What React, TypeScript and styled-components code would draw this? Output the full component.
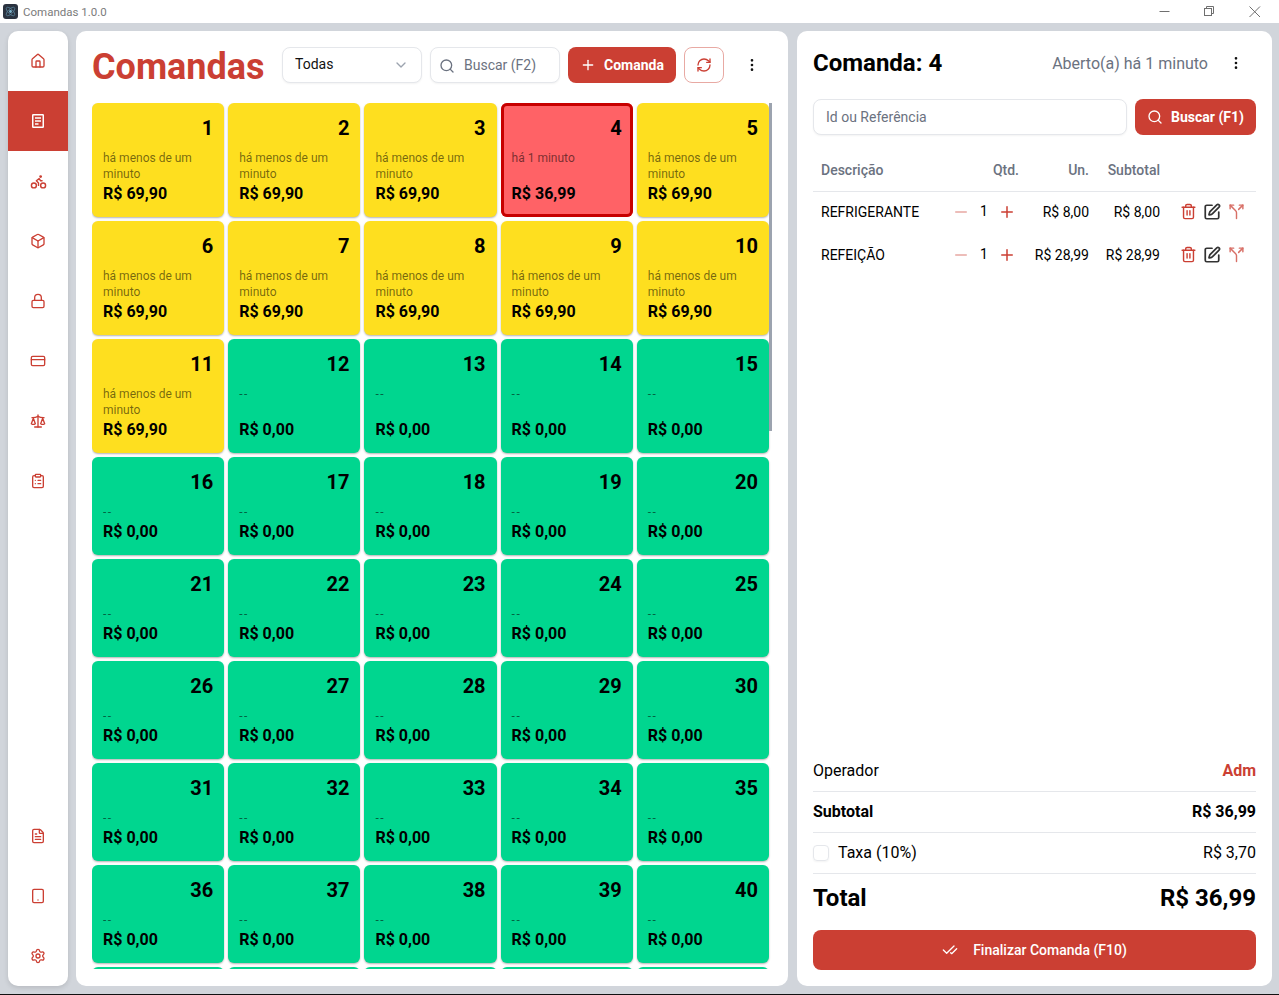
import React from "react";
import styled, { createGlobalStyle } from "styled-components";
import {
    Bike,
    Box,
    CheckCheck,
    ChevronDown,
    ClipboardList,
    CreditCard,
    EllipsisVertical,
    FileText,
    House,
    Lock,
    Minus,
    Plus,
    RefreshCw,
    Scale,
    Search,
    Settings,
    Split,
    SquarePen,
    Tablet,
    Trash2,
} from "lucide-react";

const RED = "#cb3f33";

const GlobalStyle = createGlobalStyle`
    * {
        box-sizing: border-box;
    }
    html, body {
        margin: 0;
        padding: 0;
        background: #d1d5db;
        font-family: Roboto, "Liberation Sans", sans-serif;
        color: #000;
    }
`;

const Page = styled.div`
    width: 1279px;
    height: 995px;
    display: flex;
    flex-direction: column;
    overflow: hidden;
    border-bottom: 1px solid #111;
`;

const TitleBar = styled.header`
    height: 23px;
    flex: none;
    background: #fff;
    display: flex;
    align-items: center;
    padding-left: 3px;
    font-family: Roboto, sans-serif;
    font-size: 11.5px;
    color: #7b7b7b;
`;

const AppIcon = styled.svg`
    width: 15px;
    height: 15px;
    margin-right: 5px;
`;

const WindowControls = styled.div`
    margin-left: auto;
    display: flex;
    align-items: center;
    margin-right: 2px;
`;

const WindowButton = styled.svg`
    width: 45px;
    height: 22px;
    stroke: #6f6f6f;
    fill: none;
    stroke-width: 1;
`;

const Body = styled.div`
    flex: 1;
    min-height: 0;
    display: grid;
    grid-template-columns: 60px 712px 476px;
    column-gap: 8px;
    padding: 8px 7px 8px 8px;
`;

const Sidebar = styled.nav`
    background: #fff;
    border-radius: 10px;
    box-shadow: 0 2px 5px rgba(0, 0, 0, 0.12);
    display: flex;
    flex-direction: column;
    overflow: hidden;
`;

const SideItem = styled.a<{ $active?: boolean }>`
    height: 60px;
    flex: none;
    display: flex;
    align-items: center;
    justify-content: center;
    color: ${(p) => (p.$active ? "#fff" : RED)};
    background: ${(p) => (p.$active ? RED : "transparent")};
`;

const SideSpacer = styled.div`
    flex: 1;
`;

const Main = styled.main`
    background: #fff;
    border-radius: 10px;
    padding: 16px 16px 17px;
    display: flex;
    flex-direction: column;
    gap: 20px;
    min-height: 0;
`;

const MainHeader = styled.div`
    display: flex;
    align-items: center;
    height: 36px;
    flex: none;
`;

const PageTitle = styled.h1`
    margin: 3px 18px 0 0;
    width: 172px;
    font-size: 36px;
    line-height: 40px;
    font-weight: 700;
    color: ${RED};
    white-space: nowrap;
`;

const Field = styled.div<{ $width: string }>`
    width: ${(p) => p.$width};
    height: 36px;
    border: 1px solid #e5e7eb;
    border-radius: 8px;
    box-shadow: 0 1px 2px rgba(0, 0, 0, 0.05);
    background: #fff;
    display: flex;
    align-items: center;
    padding: 0 12px;
    font-size: 14px;
    color: #6b7280;
    margin-right: 8px;
    flex: none;
`;

const SelectField = styled(Field)`
    color: #111;
    justify-content: space-between;
    padding-bottom: 2px;
    svg {
        color: #9ca3af;
        margin-top: 2px;
    }
`;

const SearchField = styled(Field)`
    padding-left: 8px;
`;

const FieldIcon = styled.span`
    display: flex;
    color: #6b7280;
    margin-right: 9px;
    margin-top: 2px;
`;

const Button = styled.button<{ $width: string }>`
    width: ${(p) => p.$width};
    height: 36px;
    flex: none;
    border: 0;
    border-radius: 8px;
    background: ${RED};
    color: #fff;
    font-family: inherit;
    font-size: 14px;
    font-weight: 700;
    display: flex;
    align-items: center;
    justify-content: center;
    gap: 8px;
    padding: 0;
`;

const WideButton = styled(Button)`
    height: 40px;
    font-weight: 500;
    gap: 15px;
    padding-bottom: 1px;
`;

const RefreshButton = styled.button`
    width: 40px;
    height: 36px;
    flex: none;
    margin: 0 10px 0 8px;
    border: 1px solid #e8a9a3;
    border-radius: 8px;
    background: #fff;
    color: ${RED};
    display: flex;
    align-items: center;
    justify-content: center;
    padding: 0;
`;

const IconOnly = styled.span`
    width: 36px;
    height: 36px;
    flex: none;
    display: flex;
    align-items: center;
    justify-content: center;
    color: #111;
`;

const DetailMenu = styled(IconOnly)`
    margin-right: 2px;
`;

const CardScroller = styled.div`
    position: relative;
    flex: 1;
    min-height: 0;
    overflow: hidden;
    padding-right: 3px;
`;

const ScrollThumb = styled.div`
    position: absolute;
    top: 0;
    right: 0;
    width: 3px;
    height: 328px;
    background: #9ca3af;
`;

const CardGrid = styled.div`
    display: grid;
    grid-template-columns: repeat(5, 1fr);
    gap: 4px;
`;

const statusColors = {
    open: { bg: "#fedf1f", line: "transparent" },
    free: { bg: "#00d68f", line: "transparent" },
    selected: { bg: "#ff6266", line: "#c70000" },
};

type Status = keyof typeof statusColors;

const Card = styled.div<{ $status: Status }>`
    background: ${(p) => statusColors[p.$status].bg};
    border-radius: 6px;
    box-shadow: ${(p) =>
        p.$status === "selected"
            ? `inset 0 0 0 3px ${statusColors.selected.line}`
            : "0 1px 2px rgba(0, 0, 0, 0.3)"};
    padding: 11px 11px 11px;
    display: flex;
    flex-direction: column;
    min-height: 98px;
`;

const CardNumber = styled.div`
    font-size: 20px;
    line-height: 28px;
    font-weight: 700;
    text-align: right;
    margin-bottom: 8px;
`;

const CardTime = styled.div<{ $empty?: boolean }>`
    font-size: 12px;
    line-height: 16px;
    color: rgba(0, 0, 0, 0.55);
    letter-spacing: ${(p) => (p.$empty ? "1.5px" : "0")};
`;

const CardPrice = styled.div`
    margin-top: auto;
    font-size: 16px;
    line-height: 24px;
    font-weight: 700;
`;

const Detail = styled.aside`
    background: #fff;
    border-radius: 10px;
    margin-left: 1px;
    padding: 16px;
    display: flex;
    flex-direction: column;
    min-height: 0;
`;

const DetailHeader = styled.div`
    display: flex;
    align-items: center;
    height: 32px;
    margin-bottom: 20px;
`;

const DetailTitle = styled.h2`
    margin: 0;
    font-size: 24px;
    line-height: 32px;
    font-weight: 700;
`;

const OpenedAt = styled.span`
    margin-left: auto;
    margin-right: 10px;
    font-size: 16px;
    color: #6b7280;
`;

const SearchRow = styled.div`
    display: flex;
    margin-bottom: 14px;
    ${Field} {
        flex: 1;
    }
`;

const ItemRow = styled.div<{ $head?: boolean }>`
    display: grid;
    grid-template-columns: 129px 69px 70px 71px 1fr;
    align-items: center;
    padding-left: 8px;
    padding-bottom: ${(p) => (p.$head ? "0" : "4px")};
    height: 43px;
    font-size: 14px;
    font-weight: ${(p) => (p.$head ? 500 : 400)};
    color: ${(p) => (p.$head ? "#6b7280" : "#000")};
    border-bottom: ${(p) => (p.$head ? "1px solid #e5e7eb" : "0")};
`;

const NumCell = styled.div`
    text-align: right;
    white-space: nowrap;
`;

const QtyCell = styled.div`
    display: flex;
    align-items: center;
    justify-content: flex-end;
    padding-right: 3px;
`;

const QtyValue = styled.span`
    width: 28px;
    text-align: center;
    position: relative;
    top: -1px;
`;

const QtyIcon = styled.span<{ $faded?: boolean }>`
    display: flex;
    color: ${RED};
    opacity: ${(p) => (p.$faded ? 0.45 : 1)};
    justify-content: center;
`;

const Actions = styled.div`
    display: flex;
    align-items: center;
    padding-left: 19.5px;
    gap: 6.5px;
`;

const ActionIcon = styled.span<{ $tone: "red" | "dark" | "soft" }>`
    display: flex;
    color: ${(p) => (p.$tone === "dark" ? "#333" : RED)};
    opacity: ${(p) => (p.$tone === "soft" ? 0.75 : 1)};
`;

const Summary = styled.div`
    margin-top: auto;
    display: flex;
    flex-direction: column;
`;

const SummaryRow = styled.div<{ $strong?: boolean }>`
    display: flex;
    align-items: center;
    justify-content: space-between;
    height: 41px;
    padding-bottom: 1px;
    font-size: 16px;
    font-weight: ${(p) => (p.$strong ? 700 : 400)};
    border-bottom: 1px solid #e5e7eb;
`;

const OperatorName = styled.span`
    color: ${RED};
    font-weight: 700;
`;

const TaxLabel = styled.label`
    display: flex;
    align-items: center;
    gap: 9px;
`;

const CheckBox = styled.span`
    width: 16px;
    height: 16px;
    border: 1px solid #e5e7eb;
    border-radius: 4px;
    box-shadow: 0 1px 2px rgba(0, 0, 0, 0.05);
`;

const TotalRow = styled.div`
    display: flex;
    align-items: center;
    justify-content: space-between;
    height: 47px;
    margin-bottom: 9px;
    font-size: 24px;
    font-weight: 700;
`;

const openCards = [1, 2, 3, 5, 6, 7, 8, 9, 10, 11];

const cards = Array.from({ length: 45 }, (_, i) => {
    const id = i + 1;
    if (id === 4) {
        return { id, status: "selected" as Status, time: "há 1 minuto", price: "R$ 36,99" };
    }
    if (openCards.includes(id)) {
        return { id, status: "open" as Status, time: "há menos de um minuto", price: "R$ 69,90" };
    }
    return { id, status: "free" as Status, time: "--", price: "R$ 0,00" };
});

const items = [
    { name: "REFRIGERANTE", un: "R$ 8,00", sub: "R$ 8,00" },
    { name: "REFEIÇÃO", un: "R$ 28,99", sub: "R$ 28,99" },
];

const NoteIcon = () => (
    <svg width="16" height="16" viewBox="0 0 16 16" fill="none" stroke="currentColor" strokeWidth="1.5">
        <rect x="2.75" y="1.75" width="10.5" height="12.5" rx="0.5" />
        <path d="M5 5h6M5 8h6M5 11h3.5" />
    </svg>
);

const App = () => {
    return (
        <Page>
            <GlobalStyle />
            <TitleBar>
                <AppIcon viewBox="0 0 15 15">
                    <rect width="15" height="15" rx="3" fill="#2b3340" />
                    <circle cx="7.5" cy="7.5" r="1.4" fill="#7fb6cf" />
                    <ellipse cx="7.5" cy="7.5" rx="5.5" ry="2.4" fill="none" stroke="#5d8ba3" strokeWidth="0.7" transform="rotate(45 7.5 7.5)" />
                    <ellipse cx="7.5" cy="7.5" rx="5.5" ry="2.4" fill="none" stroke="#5d8ba3" strokeWidth="0.7" transform="rotate(-45 7.5 7.5)" />
                </AppIcon>
                Comandas 1.0.0
                <WindowControls>
                    <WindowButton viewBox="0 0 45 22">
                        <path d="M17.5 10.5h10" />
                    </WindowButton>
                    <WindowButton viewBox="0 0 45 22">
                        <rect x="17.5" y="7.5" width="7" height="7" />
                        <path d="M19.5 7.5v-2h7v7h-2" />
                    </WindowButton>
                    <WindowButton viewBox="0 0 45 22">
                        <path d="M17.5 5.5l10.5 10.5M28 5.5L17.5 16" />
                    </WindowButton>
                </WindowControls>
            </TitleBar>
            <Body>
                <Sidebar>
                    <SideItem><House size={16} /></SideItem>
                    <SideItem $active><NoteIcon /></SideItem>
                    <SideItem><Bike size={17} /></SideItem>
                    <SideItem><Box size={16} /></SideItem>
                    <SideItem><Lock size={16} /></SideItem>
                    <SideItem><CreditCard size={16} /></SideItem>
                    <SideItem><Scale size={16} /></SideItem>
                    <SideItem><ClipboardList size={16} /></SideItem>
                    <SideSpacer />
                    <SideItem><FileText size={16} /></SideItem>
                    <SideItem><Tablet size={16} /></SideItem>
                    <SideItem><Settings size={16} /></SideItem>
                </Sidebar>
                <Main>
                    <MainHeader>
                        <PageTitle>Comandas</PageTitle>
                        <SelectField $width="140px">
                            Todas
                            <ChevronDown size={16} />
                        </SelectField>
                        <SearchField $width="130px">
                            <FieldIcon><Search size={16} /></FieldIcon>
                            Buscar (F2)
                        </SearchField>
                        <Button $width="108px">
                            <Plus size={16} />
                            Comanda
                        </Button>
                        <RefreshButton><RefreshCw size={16} /></RefreshButton>
                        <IconOnly><EllipsisVertical size={16} /></IconOnly>
                    </MainHeader>
                    <CardScroller>
                        <CardGrid>
                            {cards.map((card) => (
                                <Card key={card.id} $status={card.status}>
                                    <CardNumber>{card.id}</CardNumber>
                                    <CardTime $empty={card.status === "free"}>{card.time}</CardTime>
                                    <CardPrice>{card.price}</CardPrice>
                                </Card>
                            ))}
                        </CardGrid>
                        <ScrollThumb />
                    </CardScroller>
                </Main>
                <Detail>
                    <DetailHeader>
                        <DetailTitle>Comanda: 4</DetailTitle>
                        <OpenedAt>Aberto(a) há 1 minuto</OpenedAt>
                        <DetailMenu><EllipsisVertical size={16} /></DetailMenu>
                    </DetailHeader>
                    <SearchRow>
                        <Field $width="auto">Id ou Referência</Field>
                        <Button $width="121px">
                            <Search size={16} />
                            Buscar (F1)
                        </Button>
                    </SearchRow>
                    <ItemRow $head>
                        <div>Descrição</div>
                        <NumCell>Qtd.</NumCell>
                        <NumCell>Un.</NumCell>
                        <NumCell>Subtotal</NumCell>
                    </ItemRow>
                    {items.map((item) => (
                        <ItemRow key={item.name}>
                            <div>{item.name}</div>
                            <QtyCell>
                                <QtyIcon $faded><Minus size={18} /></QtyIcon>
                                <QtyValue>1</QtyValue>
                                <QtyIcon><Plus size={18} /></QtyIcon>
                            </QtyCell>
                            <NumCell>{item.un}</NumCell>
                            <NumCell>{item.sub}</NumCell>
                            <Actions>
                                <ActionIcon $tone="red"><Trash2 size={17} /></ActionIcon>
                                <ActionIcon $tone="dark"><SquarePen size={18} strokeWidth={2.3} /></ActionIcon>
                                <ActionIcon $tone="soft"><Split size={17} /></ActionIcon>
                            </Actions>
                        </ItemRow>
                    ))}
                    <Summary>
                        <SummaryRow>
                            <span>Operador</span>
                            <OperatorName>Adm</OperatorName>
                        </SummaryRow>
                        <SummaryRow $strong>
                            <span>Subtotal</span>
                            <span>R$ 36,99</span>
                        </SummaryRow>
                        <SummaryRow>
                            <TaxLabel>
                                <CheckBox />
                                Taxa (10%)
                            </TaxLabel>
                            <span>R$ 3,70</span>
                        </SummaryRow>
                        <TotalRow>
                            <span>Total</span>
                            <span>R$ 36,99</span>
                        </TotalRow>
                        <WideButton $width="100%">
                            <CheckCheck size={16} />
                            Finalizar Comanda (F10)
                        </WideButton>
                    </Summary>
                </Detail>
            </Body>
        </Page>
    );
};

export default App;
